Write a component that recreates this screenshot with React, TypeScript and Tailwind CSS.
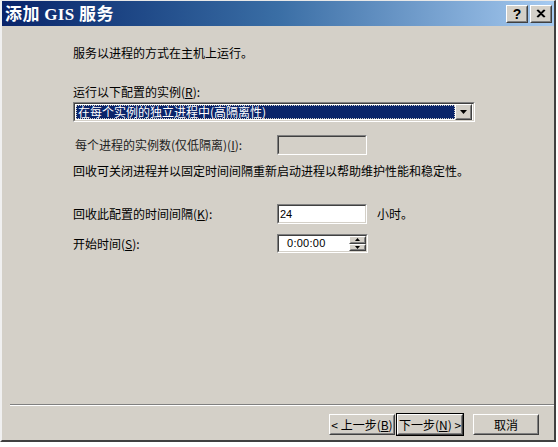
const font = { fontFamily: '"Noto Sans CJK SC", "Liberation Sans", sans-serif' };

function Sunken({ className = "", children }: { className?: string; children?: React.ReactNode }) {
  return (
    <div className={`border border-t-[#808080] border-l-[#808080] border-r-white border-b-white ${className}`}>
      <div className="h-full border border-t-[#404040] border-l-[#404040] border-r-[#d4d0c8] border-b-[#d4d0c8]">
        {children}
      </div>
    </div>
  );
}

function Raised({ className = "", children }: { className?: string; children?: React.ReactNode }) {
  return (
    <div className={`border border-t-white border-l-white border-r-[#404040] border-b-[#404040] bg-[#d4d0c8] ${className}`}>
      <div className="flex h-full items-center justify-center border border-t-[#d4d0c8] border-l-[#d4d0c8] border-r-[#808080] border-b-[#808080]">
        {children}
      </div>
    </div>
  );
}

function Button({ children, primary = false }: { children: React.ReactNode; primary?: boolean }) {
  return (
    <div className={primary ? "border border-black" : "border border-transparent"}>
      <Raised className="h-[21px] w-[66px]">
        <span className="whitespace-nowrap text-[12px] leading-none text-black">{children}</span>
      </Raised>
    </div>
  );
}

export default function App() {
  return (
    <div className="h-[447px] w-[558px] bg-white" style={font}>
      <div className="flex h-[442px] w-[556px] flex-col border-l-2 border-t border-r-2 border-b-2 border-l-[#f0f0f0] border-t-[#e8e8e8] border-r-[#404040] border-b-[#404040] bg-[#d4d0c8]">
        {/* title bar */}
        <div className="flex h-[25px] items-center justify-between bg-gradient-to-r from-[#0a246a] via-[#3a6ea5] to-[#a6caf0] pl-[3px] pr-[2px]">
          <span className="whitespace-nowrap text-[17px] font-bold tracking-wide text-white" style={{ fontFamily: '"Noto Sans CJK SC", "Liberation Serif", serif' }}>
            添加 <span style={{ fontFamily: '"Liberation Serif", serif' }}>GIS</span> 服务
          </span>
          <div className="flex gap-[2px]">
            <Raised className="h-[18px] w-[22px]">
              <span className="text-[14px] font-bold leading-none" style={{ fontFamily: '"Liberation Sans", sans-serif' }}>?</span>
            </Raised>
            <Raised className="h-[18px] w-[22px]">
              <svg width="10" height="9" viewBox="0 0 10 9">
                <path d="M1 1 L8 8 M2 1 L9 8 M8 1 L1 8 M9 1 L2 8" stroke="black" strokeWidth="1.2" />
              </svg>
            </Raised>
          </div>
        </div>

        {/* body */}
        <div className="flex flex-1 flex-col pl-[71px] text-[12px] text-black">
          <div className="mt-[19px] leading-[16px]">服务以进程的方式在主机上运行。</div>

          <div className="mt-[23px] leading-[16px]">
            运行以下配置的实例(<u>R</u>):
          </div>

          <Sunken className="mt-[2px] h-[20px] w-[402px] bg-white">
            <div className="flex h-full items-center bg-white p-[1px]">
              <div className="flex h-full flex-1 items-center whitespace-nowrap border border-dotted border-[#d4d0c8] bg-[#0a246a] pl-[1px] text-white">
                在每个实例的独立进程中(高隔离性)
              </div>
              <Raised className="h-[16px] w-[17px]">
                <svg width="7" height="4" viewBox="0 0 7 4">
                  <path d="M0 0 H7 L3.5 4 Z" fill="black" />
                </svg>
              </Raised>
            </div>
          </Sunken>

          <div className="mt-[13px] flex h-[20px] items-center">
            <span className="w-[204px] whitespace-nowrap pl-[2px] text-[#222]">每个进程的实例数(仅低隔离)(<u>I</u>):</span>
            <Sunken className="h-[20px] w-[90px] bg-[#d4d0c8]" />
          </div>

          <div className="mt-[8px] leading-[16px]">回收可关闭进程并以固定时间间隔重新启动进程以帮助维护性能和稳定性。</div>

          <div className="mt-[25px] flex h-[20px] items-center">
            <span className="w-[204px] whitespace-nowrap">回收此配置的时间间隔(<u>K</u>):</span>
            <Sunken className="h-[20px] w-[90px] bg-white">
              <div className="flex h-full items-center bg-white pl-[1px] text-[11px]" style={{ fontFamily: '"Liberation Sans", sans-serif' }}>
                24
              </div>
            </Sunken>
            <span className="ml-[10px]">小时。</span>
          </div>

          <div className="mt-[10px] flex h-[19px] items-center">
            <span className="w-[204px] whitespace-nowrap">开始时间(<u>S</u>):</span>
            <Sunken className="h-[19px] w-[91px] bg-white">
              <div className="flex h-full items-center bg-white">
                <span className="flex-1 pl-[8px] text-[11px] tracking-wide" style={{ fontFamily: '"Liberation Sans", sans-serif' }}>
                  0:00:00
                </span>
                <div className="flex h-full w-[17px] flex-col">
                  <Raised className="flex-1">
                    <svg width="5" height="3" viewBox="0 0 5 3">
                      <path d="M0 3 H5 L2.5 0 Z" fill="black" />
                    </svg>
                  </Raised>
                  <Raised className="flex-1">
                    <svg width="5" height="3" viewBox="0 0 5 3">
                      <path d="M0 0 H5 L2.5 3 Z" fill="black" />
                    </svg>
                  </Raised>
                </div>
              </div>
            </Sunken>
          </div>
        </div>

        {/* separator + buttons */}
        <div className="ml-[8px] border-t border-b border-t-[#808080] border-b-white" />
        <div className="flex h-[34px] items-start justify-end pr-[14px] pt-[7px] text-[12px]">
          <Button>&lt; 上一步(<u>B</u>)</Button>
          <Button primary>下一步(<u>N</u>) &gt;</Button>
          <div className="ml-[8px]">
            <Button>取消</Button>
          </div>
        </div>
      </div>
    </div>
  );
}
